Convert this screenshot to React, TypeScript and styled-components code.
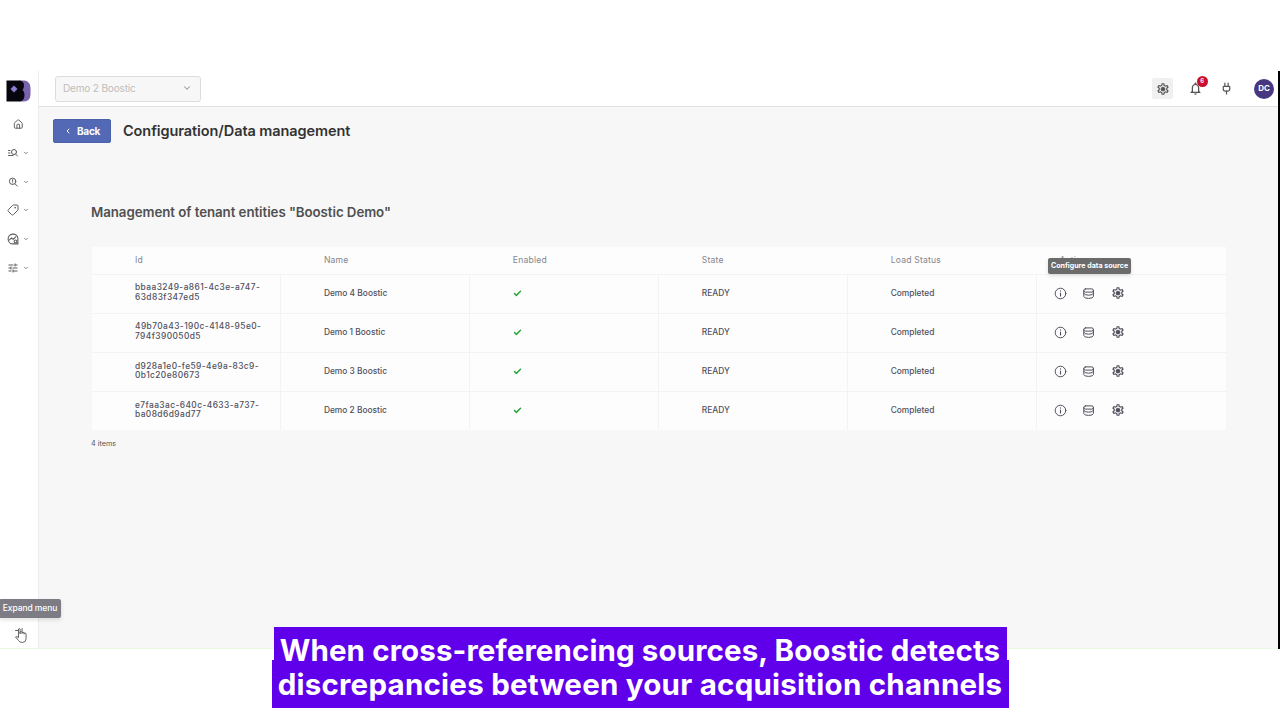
import React from "react";
import styled, { createGlobalStyle } from "styled-components";
import { MdOutlineSettings, MdTune, MdNotificationsNone } from "react-icons/md";
import { ChevronDown, ChevronLeft, Check, Tag, Plug, House } from "lucide-react";

const Global = createGlobalStyle`
  * { box-sizing: border-box; }
  body { margin: 0; background: #fff; font-family: Inter, "Liberation Sans", sans-serif; overflow: hidden; }
  svg { display: block; flex: none; }
`;

const Page = styled.div`
  position: relative;
  width: 1280px;
  height: 720px;
  padding-top: 71px;
  overflow: hidden;
  background: #fff;
`;
const Frame = styled.div`
  display: flex;
  height: 578px;
  border-right: 2px solid #000;
`;
const Sidebar = styled.nav`
  display: flex;
  flex-direction: column;
  width: 39px;
  flex: none;
  border-right: 1px solid #ececed;
  border-bottom: 1px solid #e6fbe2;
`;
const LogoBox = styled.div`
  height: 39px;
  padding: 9px 0 0 6px;
`;
const NavItem = styled.div<{ $single?: boolean }>`
  display: flex;
  align-items: center;
  gap: 4px;
  height: 28.7px;
  color: #5c5c5c;
  padding-left: ${(p) => (p.$single ? 13 : 7)}px;
`;
const MirroredTag = styled(Tag)`
  transform: scaleX(-1);
`;
const Content = styled.div`
  display: flex;
  flex-direction: column;
  flex: 1;
`;
const Header = styled.header`
  display: flex;
  align-items: center;
  justify-content: space-between;
  height: 36px;
  padding: 0 4px 0 16px;
  border-bottom: 1px solid #e2e2e2;
`;
const Select = styled.div`
  display: flex;
  align-items: center;
  justify-content: space-between;
  width: 145.5px;
  height: 26px;
  padding: 0 8px 1px 7px;
  border: 1px solid #dcdcdc;
  border-radius: 3px;
  background: #f7f7f7;
  color: #bdbdbd;
  font-size: 10px;
  letter-spacing: -0.15px;
`;
const HeaderTools = styled.div`
  display: flex;
  align-items: center;
  color: #555;
`;
const ToolButton = styled.div<{ $active?: boolean; $gap: number }>`
  position: relative;
  display: flex;
  align-items: center;
  justify-content: center;
  width: 21px;
  height: 21px;
  margin-right: ${(p) => p.$gap}px;
  border-radius: 2px;
  background: ${(p) => (p.$active ? "#f0f0f1" : "transparent")};
`;
const Badge = styled.span`
  position: absolute;
  top: -2px;
  left: 12px;
  width: 10.5px;
  height: 10.5px;
  border-radius: 6px;
  background: #c90f2b;
  color: #fff;
  font-size: 6px;
  font-weight: 600;
  line-height: 10px;
  text-align: center;
`;
const Avatar = styled.div`
  width: 20px;
  height: 20px;
  border-radius: 50%;
  background: #483780;
  color: #fff;
  font-size: 8px;
  font-weight: 700;
  line-height: 19px;
  text-align: center;
`;
const Main = styled.main`
  flex: 1;
  padding: 12px 52px 0 14px;
  background: #f7f7f7;
  border-bottom: 1px solid #e6fbe2;
`;
const TitleRow = styled.div`
  display: flex;
  align-items: center;
  gap: 12px;
  height: 24px;
`;
const BackButton = styled.button`
  display: flex;
  align-items: center;
  gap: 5px;
  width: 58px;
  height: 24px;
  padding: 0 0 0 10px;
  border: 1px solid #4c61ab;
  border-radius: 2px;
  background: #5369b5;
  color: #fff;
  font: 700 10px Inter, sans-serif;
  letter-spacing: -0.25px;
`;
const Title = styled.h1`
  margin: 0;
  padding-bottom: 2px;
  color: #333;
  font-size: 14.5px;
  font-weight: 600;
  letter-spacing: -0.08px;
  white-space: nowrap;
`;
const Section = styled.section`
  padding: 60px 0 0 38px;
`;
const Subtitle = styled.h2`
  margin: 0 0 25px;
  color: #505050;
  font-size: 13.3px;
  font-weight: 600;
  line-height: 19px;
  letter-spacing: -0.06px;
`;
const Table = styled.div`
  margin-left: 1px;
  width: 1133.5px;
  background: #fdfdfe;
  color: #50505c;
  font-size: 8.4px;
  font-weight: 500;
`;
const Row = styled.div<{ $head?: boolean }>`
  display: grid;
  grid-template-columns: repeat(6, 1fr);
  height: ${(p) => (p.$head ? 26.6 : 39.1)}px;
  color: ${(p) => (p.$head ? "#85858b" : "inherit")};
  & + & { border-top: 1px solid #f3f3f6; }
`;
const Cell = styled.div<{ $line?: boolean; $pad?: number }>`
  display: flex;
  align-items: center;
  gap: 15.5px;
  padding-left: ${(p) => p.$pad ?? 43}px;
  padding-bottom: 1px;
  border-right: ${(p) => (p.$line ? "1px solid #f3f3f6" : "0")};
  line-height: 10px;
  white-space: pre;
`;
const IdText = styled.span`
  letter-spacing: 0.42px;
  line-height: 9.8px;
`;
const HeaderText = styled.span`
  font-size: 8.6px;
  font-weight: 400;
  letter-spacing: 0.2px;
`;
const Count = styled.div`
  margin-top: 9.5px;
  color: #555;
  font-size: 7.2px;
  line-height: 10px;
`;
const Tip = styled.div<{ $x: number; $y: number; $w: number; $h: number; $small?: boolean }>`
  position: absolute;
  left: ${(p) => p.$x}px;
  top: ${(p) => p.$y}px;
  width: ${(p) => p.$w}px;
  height: ${(p) => p.$h}px;
  border-radius: 2px;
  background: ${(p) => (p.$small ? "#6b6b6c" : "#7d7b83")};
  color: #fff;
  font-size: ${(p) => (p.$small ? 7.1 : 8.5)}px;
  font-weight: ${(p) => (p.$small ? 700 : 500)};
  letter-spacing: ${(p) => (p.$small ? 0 : -0.1)}px;
  line-height: ${(p) => p.$h}px;
  text-align: center;
  white-space: nowrap;
  box-shadow: 0 2px 4px rgba(0, 0, 0, 0.12);
`;
const Pointer = styled.div`
  position: absolute;
  left: 14px;
  top: 626px;
`;
const Caption = styled.div`
  position: absolute;
  left: 0;
  top: 627px;
  width: 1280px;
  display: flex;
  flex-direction: column;
  align-items: center;
`;
const CaptionLine = styled.div<{ $w: number; $h: number; $ls: number; $lh: number; $top?: boolean }>`
  position: relative;
  z-index: ${(p) => (p.$top ? 1 : 0)};
  display: flex;
  justify-content: center;
  width: ${(p) => p.$w}px;
  height: ${(p) => p.$h}px;
  background: #6000ea;
  color: #fff;
  font-size: 29.5px;
  font-weight: 700;
  line-height: ${(p) => p.$lh}px;
  letter-spacing: ${(p) => p.$ls}px;
  white-space: nowrap;
`;

const Logo = () => (
  <svg width="25" height="22" viewBox="0 0 25 22">
    <path d="M13 .5h5.500Q24.500 1.500 24.500 8v7q-.5 6-6.500 6.500h-5z" fill="#7a63ad" />
    <path d="M.5.5h13Q18 1 18 5.500q0 3.500-1.500 4.500 2 1.500 2 5 0 6-5.500 6.500H.5z" fill="#07060e" />
    <path d="M8 5.500 11.500 9 8 12.500 4.500 9z" fill="#8f7bd0" />
  </svg>
);

const line = { fill: "none", stroke: "currentColor", strokeLinecap: "round", strokeLinejoin: "round" } as const;

const ListSearch = () => (
  <svg width="12" height="12" viewBox="0 0 12 12" {...line}>
    <path d="M1.500 3.500H3M1.500 6H3M1.500 8.500h4.500M8.700 7.200 10.500 9" />
    <circle cx="7" cy="5" r="2.500" />
  </svg>
);
const AlertSearch = () => (
  <svg width="12" height="12" viewBox="0 0 12 12" {...line}>
    <circle cx="5.600" cy="5.300" r="3.200" />
    <path d="M8 7.800 10.300 10M5.600 3.700v1.700M5.600 6.800v.1" />
  </svg>
);
const ChartSearch = () => (
  <svg width="12" height="12" viewBox="0 0 12 12" {...line} strokeWidth="1.100">
    <path d="M10.900 5.500A4.900 4.900 0 1 0 6 10.900h4.900V6" />
    <path d="m2.500 6.800 2-2 1.700 1.500 2.500-2.500" />
    <circle cx="8.500" cy="8.400" r="1.400" />
  </svg>
);
const Gear = ({ size }: { size: number }) => (
  <svg width={size} height={size} viewBox="0 0 24 24" fill="currentColor">
    <MdOutlineSettings size={24} />
    <circle cx="12" cy="12" r="2.500" />
  </svg>
);
const Info = () => (
  <svg width="13" height="13" viewBox="0 0 13 13" {...line}>
    <circle cx="6.500" cy="6.500" r="5.300" />
    <path d="M6.500 6v3M6.500 3.900v.2" strokeWidth="1.100" />
  </svg>
);
const Data = () => (
  <svg width="13" height="13" viewBox="0 0 13 13" {...line}>
    <rect x="1.800" y="1.900" width="9.600" height="3.200" rx="1.600" />
    <path d="M1.800 3.500v6q.3 1.900 4.800 1.900t4.800-1.900v-6M1.800 6.500q.5 1.700 4.800 1.700t4.800-1.700" />
  </svg>
);
const Hand = () => (
  <svg width="14" height="18" viewBox="0 0 14 18" {...line} stroke="#666" fill="#fff">
    <path d="M4.500 11V3q.8-1.200 1.600 0v4.500M6.100 7.500V6q1-1 2 0v1.500M8.100 6.500q1-1 2 .3V8M10.100 7q2-.6 2 1.200v4.300Q12 16.500 8.500 16.500q-3 0-4-2L1.500 11q.8-1.300 3 .6" />
    <path d="M1.500 4.500h3M8.100 2.500v3" />
  </svg>
);

const rows = [
  ["bbaa3249-a861-4c3e-a747-\n63d83f347ed5", "Demo 4 Boostic"],
  ["49b70a43-190c-4148-95e0-\n794f390050d5", "Demo 1 Boostic"],
  ["d928a1e0-fe59-4e9a-83c9-\n0b1c20e80673", "Demo 3 Boostic"],
  ["e7faa3ac-640c-4633-a737-\nba08d6d9ad77", "Demo 2 Boostic"],
];
const heads = ["Id", "Name", "Enabled", "State", "Load Status", "Actions"];
const menu = [
  <ListSearch />,
  <AlertSearch />,
  <MirroredTag size={12} strokeWidth={2} />,
  <ChartSearch />,
  <MdTune size={12} />,
];

export default function App() {
  return (
    <Page>
      <Global />
      <Frame>
        <Sidebar>
          <LogoBox><Logo /></LogoBox>
          <NavItem $single><House size={10.5} strokeWidth={2.200} /></NavItem>
          {menu.map((icon, i) => (
            <NavItem key={i}>{icon}<ChevronDown size={6} strokeWidth={3} /></NavItem>
          ))}
        </Sidebar>
        <Content>
          <Header>
            <Select>Demo 2 Boostic<ChevronDown size={10} strokeWidth={2.500} color="#999" /></Select>
            <HeaderTools>
              <ToolButton $active $gap={12}><Gear size={14} /></ToolButton>
              <ToolButton $gap={10}><MdNotificationsNone size={15} /><Badge>6</Badge></ToolButton>
              <ToolButton $gap={17}><Plug size={13} strokeWidth={2.200} /></ToolButton>
              <Avatar>DC</Avatar>
            </HeaderTools>
          </Header>
          <Main>
            <TitleRow>
              <BackButton><ChevronLeft size={8} strokeWidth={3} />Back</BackButton>
              <Title>Configuration/Data management</Title>
            </TitleRow>
            <Section>
              <Subtitle>Management of tenant entities "Boostic Demo"</Subtitle>
              <Table>
                <Row $head>
                  {heads.map((h, i) => <Cell key={h} $pad={i === 5 ? 23 : 43}><HeaderText>{h}</HeaderText></Cell>)}
                </Row>
                {rows.map(([id, name]) => (
                  <Row key={id}>
                    <Cell $line><IdText>{id}</IdText></Cell>
                    <Cell $line>{name}</Cell>
                    <Cell $line><Check size={9} strokeWidth={4} color="#2ca53c" /></Cell>
                    <Cell $line>READY</Cell>
                    <Cell $line>Completed</Cell>
                    <Cell $pad={17}><Info /><Data /><Gear size={14} /></Cell>
                  </Row>
                ))}
              </Table>
              <Count>4 items</Count>
            </Section>
          </Main>
        </Content>
      </Frame>
      <Tip $x={1048} $y={258} $w={83} $h={16} $small>Configure data source</Tip>
      <Tip $x={-1} $y={599} $w={62} $h={19}>Expand menu</Tip>
      <Pointer><Hand /></Pointer>
      <Caption>
        <CaptionLine $top $w={733} $h={33} $lh={47} $ls={0.11}><span>When cross-referencing sources, Boostic detects</span></CaptionLine>
        <CaptionLine $w={737} $h={48} $lh={48} $ls={0.24}><span>discrepancies between your acquisition channels</span></CaptionLine>
      </Caption>
    </Page>
  );
}
